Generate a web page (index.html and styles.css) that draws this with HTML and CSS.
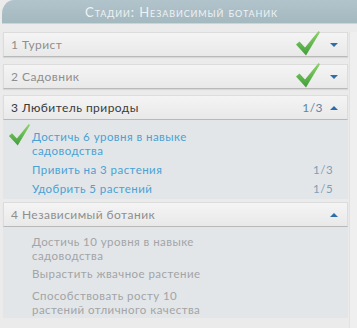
FILE: index.html
```html
<!DOCTYPE html>
<html>
<head>
<meta charset="utf-8">
<link rel="stylesheet" href="styles.css">
</head>
<body>
<div class="panel">
  <div class="header"><span class="title">Стадии: Независимый ботаник</span></div>
  <div class="body">
    <div class="list">
      <div class="row done">
        <span class="name">1 Турист</span>
        <svg class="check big" viewBox="0 0 24 25"><defs><linearGradient id="g1" x1="0" y1="0" x2="0" y2="1"><stop offset="0" stop-color="#8fd46a"/><stop offset="1" stop-color="#3f9e3a"/></linearGradient></defs><path d="M0 13.5 L3.5 10.5 L9 16.5 L22.5 0 L24 1.2 L10 24.5 Z" fill="url(#g1)"/></svg>
        <span class="tri down"></span>
      </div>
      <div class="row done">
        <span class="name">2 Садовник</span>
        <svg class="check big" viewBox="0 0 24 25"><path d="M0 13.5 L3.5 10.5 L9 16.5 L22.5 0 L24 1.2 L10 24.5 Z" fill="url(#g1)"/></svg>
        <span class="tri down"></span>
      </div>
      <div class="group first">
        <div class="row active">
          <span class="name">3 Любитель природы</span>
          <span class="count">1/3</span>
          <span class="tri up"></span>
        </div>
        <div class="tasks blue">
          <div class="task">
            <svg class="check small" viewBox="0 0 24 25"><path d="M0 13.5 L3.5 10.5 L9 16.5 L22.5 0 L24 1.2 L10 24.5 Z" fill="url(#g1)"/></svg>
            <span class="text">Достичь 6 уровня в навыке<br>садоводства</span>
          </div>
          <div class="task"><span class="text">Привить на 3 растения</span><span class="num">1/3</span></div>
          <div class="task"><span class="text">Удобрить 5 растений</span><span class="num">1/5</span></div>
        </div>
      </div>
      <div class="group second">
        <div class="row locked">
          <span class="name">4 Независимый ботаник</span>
          <span class="tri up"></span>
        </div>
        <div class="tasks grey">
          <div class="task"><span class="text">Достичь 10 уровня в навыке<br>садоводства</span></div>
          <div class="task"><span class="text">Вырастить жвачное растение</span></div>
          <div class="task wide"><span class="text">Способствовать росту 10<br>растений отличного качества</span></div>
        </div>
      </div>
    </div>
    <div class="track"></div>
  </div>
</div>
</body>
</html>
```

FILE: styles.css
```css
html, body {
  margin: 0;
  padding: 0;
}
body {
  width: 357px;
  height: 328px;
  overflow: hidden;
  background: #ebebeb;
  font-family: "Lato", "Noto Sans", sans-serif;
}
.panel {
  display: flex;
  flex-direction: column;
}
.header {
  height: 23px;
  margin-left: 2px;
  border-top-left-radius: 12px 14px;
  background: linear-gradient(#b2c4cb, #a4b8c0);
  border-bottom: 1px solid #c9d5d9;
  display: flex;
  align-items: center;
  justify-content: center;
  padding-left: 4px;
}
.title {
  font-variant: small-caps;
  font-size: 13px;
  color: #eef3f5;
  letter-spacing: 0.9px;
}
.body {
  display: flex;
  padding-top: 8px;
}
.list {
  width: 345px;
  margin-left: 3px;
  display: flex;
  flex-direction: column;
}
.row {
  height: 25px;
  box-sizing: border-box;
  background: linear-gradient(#f4f4f4, #e9e9e9);
  border: 1px solid #dcdcdc;
  border-bottom: 1px solid #b9b9b9;
  box-shadow: 0 1px 1px rgba(0,0,0,0.08);
  display: flex;
  align-items: center;
  padding-left: 7px;
  padding-right: 9px;
  font-size: 12px;
  letter-spacing: 0.45px;
  margin-bottom: 7px;
}
.group .row {
  margin-bottom: 0;
}
.name {
  flex: 1;
  color: #8e8e8e;
}
.row.active .name {
  color: #3a3a3a;
}
.check.big {
  width: 24px;
  height: 25px;
  margin-top: -3px;
  margin-right: 10px;
}
.count {
  color: #5d85a8;
  margin-right: 7px;
}
.tri {
  width: 0;
  height: 0;
  border-left: 4px solid transparent;
  border-right: 4px solid transparent;
}
.tri.down {
  border-top: 4px solid #2c6eaa;
}
.tri.up {
  border-bottom: 4px solid #2c6eaa;
}
.group {
  display: flex;
  flex-direction: column;
}
.group.first {
  margin-top: -1px;
}
.group.second {
  margin-top: 3px;
}
.tasks {
  background: #e3e6e9;
  display: flex;
  flex-direction: column;
  font-size: 11.5px;
  line-height: 14px;
  letter-spacing: 0.45px;
}
.tasks.blue {
  color: #48a2d4;
  padding: 10px 15px 3px 29px;
  gap: 5px;
}
.tasks.grey {
  color: #a2a4a6;
  padding: 8px 15px 1px 29px;
  gap: 4px;
}
.task {
  display: flex;
  position: relative;
}
.task.wide {
  margin-top: 4px;
}
.task .text {
  flex: 1;
}
.num {
  color: #7f9fb8;
}
.check.small {
  position: absolute;
  left: -24px;
  top: -6px;
  width: 23px;
  height: 22px;
}
.track {
  width: 7px;
  margin-left: 1px;
  height: 310px;
  background: #efefef;
  border-left: 1px solid #e2e2e2;
}
```
